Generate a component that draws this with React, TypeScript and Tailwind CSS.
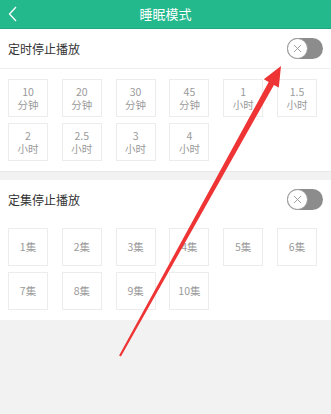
import React from "react";

const timeOpts = [
  ["10", "分钟"],
  ["20", "分钟"],
  ["30", "分钟"],
  ["45", "分钟"],
  ["1", "小时"],
  ["1.5", "小时"],
  ["2", "小时"],
  ["2.5", "小时"],
  ["3", "小时"],
  ["4", "小时"],
];

const epOpts = ["1集", "2集", "3集", "4集", "5集", "6集", "7集", "8集", "9集", "10集"];

function Toggle() {
  return (
    <div className="relative h-[21px] w-[36px] rounded-full bg-[#8c8c8c]">
      <div className="absolute left-0 top-0 flex h-[21px] w-[21px] items-center justify-center rounded-full border border-[#9a9a9a] bg-white">
        <svg width="9" height="9" viewBox="0 0 10 10" stroke="#9a9a9a" strokeWidth="1" fill="none">
          <path d="M1 1L9 9M9 1L1 9" />
        </svg>
      </div>
    </div>
  );
}

function SectionTitle({ text }: { text: string }) {
  return (
    <div className="flex h-[39px] items-center justify-between px-[8px]">
      <span className="text-[12px] text-[#333]">{text}</span>
      <Toggle />
    </div>
  );
}

export default function App() {
  return (
    <div
      className="relative h-[414px] w-[331px] overflow-hidden bg-[#f2f2f2]"
      style={{ fontFamily: '"Noto Sans CJK SC", "Noto Sans", sans-serif' }}
    >
      {/* header */}
      <div className="relative flex h-[29px] items-center justify-center border-b border-[#1fa880] bg-[#24b98d]">
        <svg className="absolute left-[8px] top-[6px]" width="9" height="16" viewBox="0 0 9 16" fill="none" stroke="#ffffff" strokeWidth="1.3">
          <path d="M8 1L1.5 8L8 15" />
        </svg>
        <span className="text-[13px] text-white">睡眠模式</span>
      </div>

      {/* timed stop */}
      <div className="bg-white">
        <SectionTitle text="定时停止播放" />
        <div className="border-t border-[#eeeeee] pb-[10px] pl-[8px] pt-[10px]">
          <div className="grid grid-cols-[repeat(6,40px)] gap-x-[13.8px] gap-y-[6px]">
            {timeOpts.map(([n, u]) => (
              <div
                key={n}
                className="flex h-[38px] items-center justify-center border border-[#ececec] text-center text-[10.5px] leading-[13px] text-[#9a9a9a]"
              >
                <span>
                  {n}
                  <br />
                  {u}
                </span>
              </div>
            ))}
          </div>
        </div>
      </div>

      <div className="h-[9px] border-t border-[#e8e8e8]" />

      {/* episode stop */}
      <div className="bg-white">
        <SectionTitle text="定集停止播放" />
        <div className="pb-[10px] pl-[8px] pt-[9px]">
          <div className="grid grid-cols-[repeat(6,40px)] gap-x-[13.8px] gap-y-[6px]">
            {epOpts.map((e) => (
              <div
                key={e}
                className="flex h-[38px] items-center justify-center border border-[#ececec] text-[10.5px] text-[#9a9a9a]"
              >
                {e}
              </div>
            ))}
          </div>
        </div>
      </div>

      {/* annotation arrow */}
      <svg className="pointer-events-none absolute left-0 top-0" width="331" height="414" viewBox="0 0 331 414">
        <polygon
          points="119.1,355.5 268.7,82 263.8,79.3 281,66 278.8,87.6 273.9,84.9 120.9,356.5"
          fill="#ee3434"
        />
      </svg>
    </div>
  );
}
